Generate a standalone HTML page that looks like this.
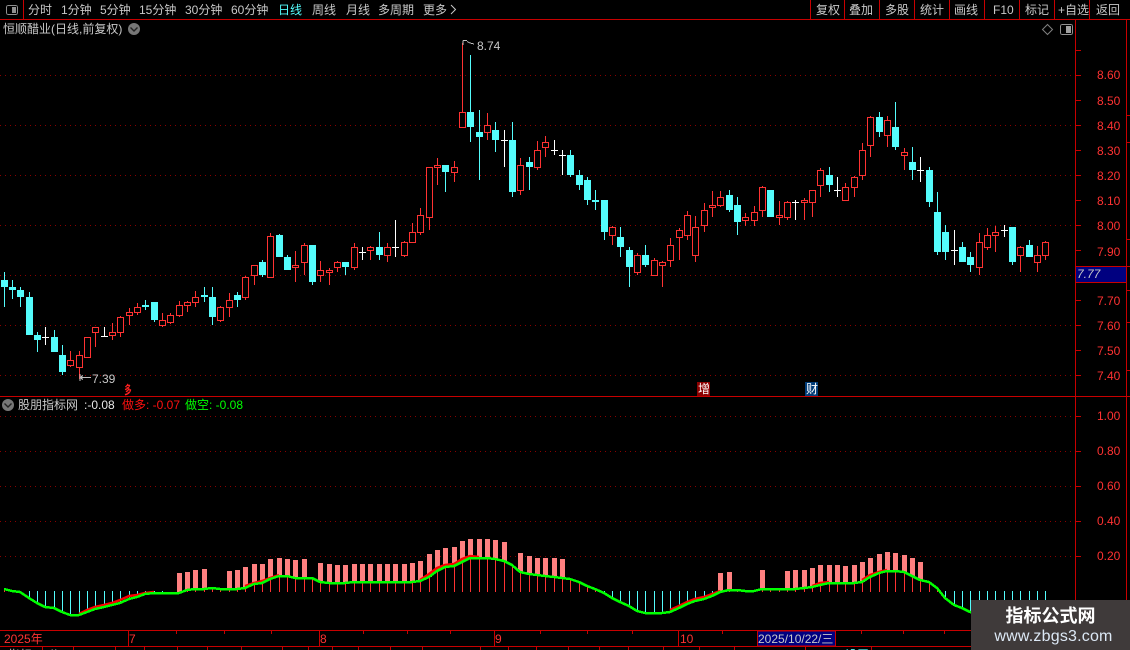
<!DOCTYPE html>
<html><head><meta charset="utf-8"><style>
html,body{margin:0;padding:0;background:#000}
#r{position:relative;width:1130px;height:650px;overflow:hidden;background:#000}
svg{position:absolute;left:0;top:0}
.t{position:absolute;white-space:pre;font:12px/14px "Liberation Sans","WenQuanYi Zen Hei","Noto Sans CJK SC",sans-serif;color:#c8c8c8}
.y{color:#ff3232;left:1097px}
.b{color:#ff3232}
</style></head><body><div id="r">
<svg width="1130" height="650" viewBox="0 0 1130 650" shape-rendering="crispEdges" fill="none">
<path stroke="#8a0000" stroke-dasharray="1 4" d="M0 75.5H1075M0 125.5H1075M0 175.5H1075M0 225.5H1075M0 275.5H1075M0 325.5H1075M0 375.5H1075M0 416.5H1075M0 451.5H1075M0 486.5H1075M0 521.5H1075M0 556.5H1075"/>
<!-- red wicks -->
<path stroke="#ff3232" d="M70.5 351V367M79.5 351V379M95.5 327V347M112.5 323V340M120.5 316V337M129.5 308V325M137.5 303V315M162.5 313V327M170.5 313V324M179.5 301V317M187.5 301V312M195.5 291V307M220.5 306V322M229.5 293V317M245.5 276V300M254.5 265V285M270.5 233V278M295.5 251V282M304.5 243V275M320.5 261V282M329.5 268V285M337.5 261V272M354.5 243V270M370.5 246V260M387.5 243V262M404.5 241V257M412.5 223V243M420.5 208V235M429.5 167V230M437.5 158V185M454.5 161V182M462.5 43V128M487.5 113V140M520.5 158V195M537.5 141V170M545.5 136V157M612.5 226V245M637.5 253V275M654.5 258V276M662.5 261V287M670.5 238V267M679.5 228V260M687.5 211V240M695.5 216V262M704.5 203V232M712.5 191V217M720.5 191V207M745.5 213V226M754.5 206V226M762.5 186V217M779.5 201V225M787.5 201V220M804.5 198V220M812.5 190V217M820.5 168V197M845.5 183V201M854.5 176V197M862.5 143V180M870.5 116V157M887.5 116V147M904.5 148V170M979.5 233V275M987.5 228V250M995.5 226V252M1020.5 246V272M1037.5 246V272M1045.5 241V260"/>
<!-- red bodies -->
<path stroke="#ff3232" fill="#000" d="M67.5 360.5h6V365.5h-6zM76.5 355.5h6V367.5h-6zM84.5 337.5h6V357.5h-6zM92.5 327.5h6V332.5h-6zM109.5 332.5h6V335.5h-6zM117.5 317.5h6V332.5h-6zM126.5 312.5h6V315.5h-6zM134.5 307.5h6V312.5h-6zM159.5 320.5h6V325.5h-6zM167.5 315.5h6V322.5h-6zM176.5 305.5h6V315.5h-6zM184.5 302.5h6V305.5h-6zM192.5 297.5h6V302.5h-6zM217.5 307.5h6V320.5h-6zM226.5 300.5h6V307.5h-6zM242.5 277.5h6V297.5h-6zM251.5 265.5h6V275.5h-6zM267.5 236.5h6V277.5h-6zM292.5 265.5h6V267.5h-6zM301.5 245.5h6V262.5h-6zM317.5 270.5h6V275.5h-6zM326.5 270.5h6V272.5h-6zM334.5 262.5h6V267.5h-6zM351.5 247.5h6V267.5h-6zM367.5 247.5h6V250.5h-6zM384.5 247.5h6V255.5h-6zM401.5 242.5h6V255.5h-6zM409.5 232.5h6V242.5h-6zM417.5 215.5h6V232.5h-6zM426.5 167.5h6V217.5h-6zM434.5 165.5h6V167.5h-6zM451.5 167.5h6V172.5h-6zM459.5 112.5h6V127.5h-6zM484.5 125.5h6V132.5h-6zM517.5 165.5h6V190.5h-6zM534.5 150.5h6V167.5h-6zM542.5 142.5h6V147.5h-6zM609.5 227.5h6V235.5h-6zM634.5 255.5h6V272.5h-6zM651.5 260.5h6V275.5h-6zM659.5 262.5h6V265.5h-6zM667.5 245.5h6V260.5h-6zM676.5 230.5h6V237.5h-6zM684.5 215.5h6V235.5h-6zM692.5 227.5h6V255.5h-6zM701.5 210.5h6V225.5h-6zM709.5 205.5h6V207.5h-6zM717.5 197.5h6V205.5h-6zM742.5 217.5h6V220.5h-6zM751.5 212.5h6V220.5h-6zM759.5 187.5h6V210.5h-6zM776.5 215.5h6V217.5h-6zM784.5 202.5h6V217.5h-6zM801.5 200.5h6V202.5h-6zM809.5 190.5h6V202.5h-6zM817.5 170.5h6V185.5h-6zM842.5 187.5h6V200.5h-6zM851.5 177.5h6V187.5h-6zM859.5 150.5h6V175.5h-6zM867.5 117.5h6V145.5h-6zM884.5 120.5h6V135.5h-6zM901.5 152.5h6V155.5h-6zM976.5 242.5h6V267.5h-6zM984.5 235.5h6V247.5h-6zM992.5 232.5h6V235.5h-6zM1017.5 247.5h6V255.5h-6zM1034.5 255.5h6V262.5h-6zM1042.5 242.5h6V255.5h-6z"/>
<!-- cyan wicks -->
<path stroke="#54fcfc" d="M4.5 272V307M12.5 280V299M20.5 287V307M29.5 292V335M37.5 332V352M54.5 330V352M62.5 345V375M145.5 300V310M154.5 302V322M204.5 287V302M212.5 287V325M237.5 292V307M262.5 260V277M279.5 234V257M287.5 255V270M312.5 245V285M345.5 262V275M379.5 232V260M445.5 165V192M470.5 55V142M479.5 110V180M495.5 122V152M512.5 122V197M529.5 157V190M570.5 150V177M579.5 170V190M587.5 177V205M595.5 190V210M604.5 200V240M620.5 227V257M629.5 247V287M645.5 245V267M729.5 190V212M737.5 197V235M829.5 167V192M879.5 112V137M895.5 102V150M912.5 147V180M929.5 167V207M937.5 192V255M945.5 225V260M962.5 242V262M970.5 252V272M1012.5 227V265M1029.5 240V257"/>
<!-- cyan bodies -->
<path fill="#54fcfc" d="M1 280h7V287h-7zM9 287h7V290h-7zM17 290h7V297h-7zM26 297h7V335h-7zM34 335h7V340h-7zM51 337h7V352h-7zM59 355h7V372h-7zM142 305h7V307h-7zM151 302h7V320h-7zM201 295h7V297h-7zM209 297h7V317h-7zM234 295h7V300h-7zM259 262h7V275h-7zM276 235h7V257h-7zM284 257h7V270h-7zM309 245h7V282h-7zM342 262h7V267h-7zM376 247h7V255h-7zM442 165h7V172h-7zM467 112h7V127h-7zM476 132h7V137h-7zM492 130h7V140h-7zM509 140h7V192h-7zM526 162h7V167h-7zM567 155h7V175h-7zM576 175h7V185h-7zM584 180h7V200h-7zM592 200h7V202h-7zM601 200h7V232h-7zM617 237h7V247h-7zM626 250h7V267h-7zM642 255h7V265h-7zM726 195h7V210h-7zM734 205h7V222h-7zM767 190h7V217h-7zM826 175h7V185h-7zM876 117h7V132h-7zM892 127h7V147h-7zM909 162h7V170h-7zM926 170h7V202h-7zM934 212h7V252h-7zM942 232h7V252h-7zM959 247h7V262h-7zM967 257h7V265h-7zM1009 227h7V262h-7zM1026 245h7V257h-7z"/>
<!-- white doji -->
<path stroke="#fff" d="M45.5 327V345M42 337.5h7M104.5 327V337M101 336.5h7M362.5 247V260M359 252.5h7M395.5 220V257M392 247.5h7M504.5 130V167M501 140.5h7M554.5 140V155M551 150.5h7M562.5 150V175M559 155.5h7M795.5 200V220M792 202.5h7M837.5 177V197M834 190.5h7M920.5 157V182M917 170.5h7M954.5 230V265M951 250.5h7M1004.5 225V237M1001 230.5h7"/>
<!-- markers -->
<path stroke="#c0c0c0" d="M80 377.5H91M80 377.5l3-2M80 377.5l3 2M80 374V381M463 40.5h4M463 40.5V45M467 41.5l3 1.5 4 1"/>
<!-- pink bars -->
<path fill="#ff8080" d="M177 573h5V593h-5zM185 572h5V590h-5zM193 570h5V589h-5zM202 569h5V589h-5zM227 571h5V589h-5zM235 570h5V589h-5zM243 567h5V588h-5zM252 564h5V584h-5zM260 564h5V583h-5zM268 559h5V579h-5zM277 558h5V576h-5zM285 559h5V576h-5zM293 560h5V578h-5zM302 559h5V578h-5zM318 563h5V582h-5zM327 564h5V583h-5zM335 565h5V583h-5zM343 565h5V583h-5zM352 564h5V582h-5zM360 564h5V582h-5zM368 564h5V582h-5zM377 564h5V582h-5zM385 564h5V582h-5zM393 564h5V582h-5zM402 564h5V582h-5zM410 563h5V582h-5zM418 561h5V581h-5zM427 554h5V577h-5zM435 550h5V571h-5zM443 548h5V567h-5zM452 547h5V566h-5zM460 541h5V562h-5zM468 539h5V558h-5zM477 539h5V558h-5zM485 539h5V558h-5zM493 540h5V559h-5zM502 542h5V561h-5zM518 553h5V572h-5zM527 556h5V574h-5zM535 558h5V575h-5zM543 558h5V576h-5zM552 558h5V577h-5zM560 559h5V578h-5zM718 573h5V592h-5zM727 572h5V590h-5zM760 570h5V589h-5zM785 571h5V589h-5zM793 570h5V589h-5zM802 570h5V588h-5zM810 568h5V587h-5zM818 565h5V585h-5zM827 565h5V583h-5zM835 565h5V583h-5zM843 566h5V583h-5zM852 565h5V583h-5zM860 562h5V582h-5zM868 558h5V577h-5zM877 554h5V573h-5zM885 552h5V571h-5zM893 553h5V571h-5zM902 555h5V572h-5zM910 558h5V576h-5zM918 562h5V580h-5z"/>
<!-- cyan spikes -->
<path stroke="#54fcfc" d="M29.5 591V598M37.5 591V603M45.5 591V607M54.5 591V608M62.5 591V612M70.5 591V615M79.5 591V615M87.5 591V612M95.5 591V609M104.5 591V607M112.5 591V605M120.5 591V603M129.5 591V599M137.5 591V597M145.5 591V594M154.5 591V593M162.5 591V593M604.5 591V593M612.5 591V598M620.5 591V602M629.5 591V606M637.5 591V611M645.5 591V613M654.5 591V613M662.5 591V613M670.5 591V612M679.5 591V608M687.5 591V604M695.5 591V601M704.5 591V599M712.5 591V596M945.5 591V598M954.5 591V605M962.5 591V608M970.5 591V612M979.5 591V614M987.5 591V614M995.5 591V614M1004.5 591V614M1012.5 591V614M1020.5 591V614M1029.5 591V614M1037.5 591V614M1045.5 591V614"/>
<!-- red spikes -->
<path stroke="#ff3232" d="M4.5 589V592M12.5 591V592M187.5 590V592M195.5 589V592M204.5 589V592M212.5 588V592M220.5 589V592M229.5 589V592M237.5 589V592M245.5 588V592M254.5 584V592M262.5 583V592M270.5 579V592M279.5 576V592M287.5 576V592M295.5 578V592M304.5 578V592M312.5 578V592M320.5 582V592M329.5 583V592M337.5 583V592M345.5 583V592M354.5 582V592M362.5 582V592M370.5 582V592M379.5 582V592M387.5 582V592M395.5 582V592M404.5 582V592M412.5 582V592M420.5 581V592M429.5 577V592M437.5 571V592M445.5 567V592M454.5 566V592M462.5 562V592M470.5 558V592M479.5 558V592M487.5 558V592M495.5 559V592M504.5 561V592M512.5 565V592M520.5 572V592M529.5 574V592M537.5 575V592M545.5 576V592M554.5 577V592M562.5 578V592M570.5 579V592M579.5 582V592M587.5 586V592M595.5 589V592M729.5 590V592M737.5 590V592M745.5 591V592M762.5 589V592M770.5 589V592M779.5 589V592M787.5 589V592M795.5 589V592M804.5 588V592M812.5 587V592M820.5 585V592M829.5 583V592M837.5 583V592M845.5 583V592M854.5 583V592M862.5 582V592M870.5 577V592M879.5 573V592M887.5 571V592M895.5 571V592M904.5 572V592M912.5 576V592M920.5 580V592M929.5 582V592M937.5 588V592"/>
<!-- red ma segments -->
<g stroke="#ff0000" stroke-width="2.5" shape-rendering="auto">
<polyline points="79,614 87,610 95,607 104,605 112,603 120,600 129,596 137,595 145,593 154,592"/>
<polyline points="245,586 254,583 262,581 270,578 279,575"/>
<polyline points="420,580 429,574 437,568 445,565 454,564 462,559 470,556 479,557"/>
<polyline points="670,610 679,606 687,602 695,599 704,597 712,594 720,591"/>
<polyline points="812,586 820,583 829,582"/>
<polyline points="862,580 870,575 879,572 887,570"/>
</g>
<polyline stroke="#00ff00" stroke-width="2.5" shape-rendering="crispEdges" points="4,589 12,591 20,592 29,598 37,603 45,607 54,608 62,612 70,615 79,615 87,612 95,609 104,607 112,605 120,603 129,599 137,597 145,594 154,593 162,593 170,593 179,593 187,590 195,589 204,589 212,588 220,589 229,589 237,589 245,588 254,584 262,583 270,579 279,576 287,576 295,578 304,578 312,578 320,582 329,583 337,583 345,583 354,582 362,582 370,582 379,582 387,582 395,582 404,582 412,582 420,581 429,577 437,571 445,567 454,566 462,562 470,558 479,558 487,558 495,559 504,561 512,565 520,572 529,574 537,575 545,576 554,577 562,578 570,579 579,582 587,586 595,589 604,593 612,598 620,602 629,606 637,611 645,613 654,613 662,613 670,612 679,608 687,604 695,601 704,599 712,596 720,592 729,590 737,590 745,591 754,591 762,589 770,589 779,589 787,589 795,589 804,588 812,587 820,585 829,583 837,583 845,583 854,583 862,582 870,577 879,573 887,571 895,571 904,572 912,576 920,580 929,582 937,588 945,598 954,605 962,608 970,612 979,614"/>
<!-- frame -->
<path stroke="#c80000" d="M0 19.5H1130M23.5 0V19M810.5 0V19M844.5 0V19M879.5 0V19M914.5 0V19M949.5 0V19M984.5 0V19M1019.5 0V19M1054.5 0V19M1089.5 0V19M1075.5 19V631M1126.5 19V631M0 396.5H1130M0 630.5H1130M0 646.5H1130M128.5 631V646M319.5 631V646M494.5 631V646M678.5 631V646M1075 50.5h6M1075 75.5h6M1075 100.5h6M1075 125.5h6M1075 150.5h6M1075 175.5h6M1075 200.5h6M1075 225.5h6M1075 250.5h6M1075 300.5h6M1075 325.5h6M1075 350.5h6M1075 375.5h6M1075 416.5h6M1075 451.5h6M1075 486.5h6M1075 521.5h6M1075 556.5h6M1126 115.5h4M1126 142.5h4M1126 239.5h4M1126 266.5h4M1126 290.5h4M1126 322.5h4M1126 370.5h4M176.5 631v3M224.5 631v3M271.5 631v3M363.5 631v3M407.5 631v3M450.5 631v3M540.5 631v3M587.5 631v3M632.5 631v3M722.5 631v3M861.5 631v3M903.5 631v3M944.5 631v3M42.5 646v4M73.5 646v4M115.5 646v4M144.5 646v4M177.5 646v4M207.5 646v4M241.5 646v4M282.5 646v4M308.5 646v4M332.5 646v4M358.5 646v4M390.5 646v4M422.5 646v4M480.5 646v4M508.5 646v4M536.5 646v4M568.5 646v4M599.5 646v4M628.5 646v4M663.5 646v4M699.5 646v4M734.5 646v4M805.5 646v4M871.5 646v4"/>
<rect x="1075.5" y="266.5" width="51" height="16" fill="#000080" stroke="#c80000"/>
<rect x="757.5" y="631" width="78" height="15" fill="#000080" stroke="#c80000"/>
<rect x="697" y="382" width="13" height="14" fill="#8b0000"/>
<rect x="805" y="382" width="13" height="14" fill="#003c78"/>
<!-- icons -->
<rect x="6.5" y="5.5" width="11" height="9" rx="2" stroke="#909090"/>
<rect x="12" y="7" width="4" height="6" fill="#909090"/>
<rect x="1060.5" y="24.5" width="12" height="10" rx="2" stroke="#909090"/>
<rect x="1066" y="26" width="5" height="7" fill="#a0a0a0"/>
<path stroke="#808080" shape-rendering="auto" d="M1047.5 24.5l5 5-5 5-5-5z"/>
<circle cx="134" cy="29" r="6" fill="#777" shape-rendering="auto"/>
<path stroke="#222" stroke-width="1.4" shape-rendering="auto" d="M130.5 27.5l3.5 3.5 3.5-3.5"/>
<circle cx="8" cy="405" r="6" fill="#777" shape-rendering="auto"/>
<path stroke="#222" stroke-width="1.4" shape-rendering="auto" d="M4.5 403.5l3.5 3.5 3.5-3.5"/>
<path stroke="#c8c8c8" shape-rendering="auto" d="M451 5l4.5 4.5-4.5 4.5"/>
</svg>

<div class="t" style="left:28px;top:3px">分时</div>
<div class="t" style="left:61px;top:3px">1分钟</div>
<div class="t" style="left:100px;top:3px">5分钟</div>
<div class="t" style="left:139px;top:3px">15分钟</div>
<div class="t" style="left:185px;top:3px">30分钟</div>
<div class="t" style="left:231px;top:3px">60分钟</div>
<div class="t" style="left:278px;top:3px;color:#54fcfc">日线</div>
<div class="t" style="left:312px;top:3px">周线</div>
<div class="t" style="left:346px;top:3px">月线</div>
<div class="t" style="left:378px;top:3px">多周期</div>
<div class="t" style="left:423px;top:3px">更多</div>
<div class="t" style="left:816px;top:3px">复权</div>
<div class="t" style="left:849px;top:3px">叠加</div>
<div class="t" style="left:885px;top:3px">多股</div>
<div class="t" style="left:920px;top:3px">统计</div>
<div class="t" style="left:954px;top:3px">画线</div>
<div class="t" style="left:993px;top:3px">F10</div>
<div class="t" style="left:1025px;top:3px">标记</div>
<div class="t" style="left:1058px;top:3px">+自选</div>
<div class="t" style="left:1096px;top:3px">返回</div>
<div class="t" style="left:3px;top:22px">恒顺醋业(日线,前复权)</div>

<div class="t" style="left:477px;top:39px">8.74</div>
<div class="t" style="left:92px;top:372px">7.39</div>

<div class="t y" style="top:68px">8.60</div>
<div class="t y" style="top:94px">8.50</div>
<div class="t y" style="top:119px">8.40</div>
<div class="t y" style="top:144px">8.30</div>
<div class="t y" style="top:169px">8.20</div>
<div class="t y" style="top:194px">8.10</div>
<div class="t y" style="top:219px">8.00</div>
<div class="t y" style="top:245px">7.90</div>
<div class="t" style="left:1077px;top:267px;font-style:italic">7.77</div>
<div class="t y" style="top:294px">7.70</div>
<div class="t y" style="top:319px">7.60</div>
<div class="t y" style="top:344px">7.50</div>
<div class="t y" style="top:369px">7.40</div>
<div class="t y" style="top:409px">1.00</div>
<div class="t y" style="top:444px">0.80</div>
<div class="t y" style="top:479px">0.60</div>
<div class="t y" style="top:514px">0.40</div>
<div class="t y" style="top:549px">0.20</div>

<div class="t" style="left:122px;top:383px;color:#ff2020;font-weight:bold;transform:scale(.6,1)">多</div>
<div class="t" style="left:698px;top:382px;color:#fff">增</div>
<div class="t" style="left:806px;top:382px;color:#fff">财</div>

<div class="t" style="left:18px;top:398px">股朋指标网</div>
<div class="t" style="left:84px;top:398px;color:#e8e8e8">:-0.08</div>
<div class="t" style="left:122px;top:398px;color:#ff1010">做多: -0.07</div>
<div class="t" style="left:185px;top:398px;color:#00ff00">做空: -0.08</div>

<div class="t b" style="left:4px;top:632px">2025年</div>
<div class="t b" style="left:129px;top:632px">7</div>
<div class="t b" style="left:320px;top:632px">8</div>
<div class="t b" style="left:495px;top:632px">9</div>
<div class="t b" style="left:680px;top:632px">10</div>
<div class="t" style="left:758px;top:632px">2025/10/22/三</div>

<div class="t" style="left:8px;top:648px">指标</div>
<div class="t" style="left:48px;top:648px">公</div>
<div class="t" style="left:845px;top:648px;color:#54fcfc">设置</div>

<div style="position:absolute;left:971px;top:600px;width:159px;height:50px;background:#3f3a3a"></div>
<div class="t" style="left:971px;top:605px;width:159px;text-align:center;font-size:18px;line-height:22px;font-weight:bold;color:#fff;font-family:'Liberation Sans','Noto Sans CJK SC',sans-serif">指标公式网</div>
<div class="t" style="left:974px;top:627px;width:159px;text-align:center;font-size:16px;line-height:20px;color:#dce8f5;letter-spacing:.2px">www.zbgs3.com</div>
</div></body></html>
